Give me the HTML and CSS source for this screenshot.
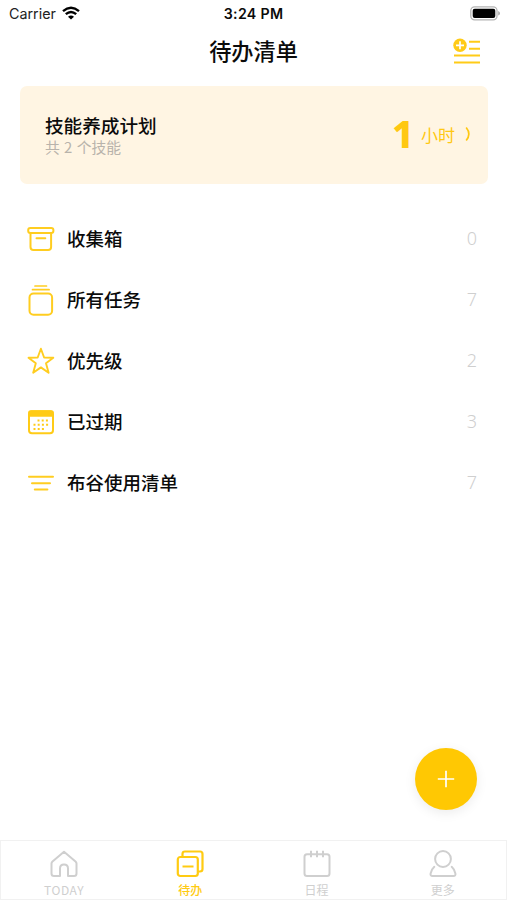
FILE: index.html
```html
<!DOCTYPE html>
<html lang="zh-CN">
<head>
<meta charset="utf-8">
<title>待办清单</title>
<link rel="stylesheet" href="styles.css">
</head>
<body>
<div class="screen">
  <div class="status">
    <div class="carrier"><span>Carrier</span>
      <svg width="18" height="14" viewBox="0 0 18 14" fill="none" stroke="#000" stroke-width="2.4"><path d="M1 5.2Q9-1.6 17 5.2M3.8 8.2Q9 3.6 14.2 8.2"/><path d="M9 13.6 6 10.7Q9 8.3 12 10.7Z" fill="#000" stroke="none"/></svg>
    </div>
    <div class="clock">3:24 PM</div>
    <svg class="battery" width="31" height="15" viewBox="0 0 31 15"><rect x=".8" y=".8" width="26.2" height="13" rx="3.8" fill="#fff" stroke="#b4b4b4" stroke-width="1.3"/><rect x="2.7" y="2.7" width="22.6" height="9.4" rx="2" fill="#000"/><path d="M28.2 5v4.6q1.8-.7 1.8-2.3t-1.8-2.3Z" fill="#aaa"/></svg>
  </div>
  <header class="header">
    <h1>待办清单</h1>
    <svg class="add-list" width="28" height="28" viewBox="0 0 28 28" fill="none" stroke="#ffcb17" stroke-width="2"><circle cx="7" cy="7.3" r="6.7" fill="#ffcb17" stroke="none"/><path d="M7 3.3v8M3 7.3h8" stroke="#fff" stroke-width="1.7"/><path d="M16 3.8h11M16 10.8h11M1 17.6h26M1 24.5h26"/></svg>
  </header>
  <section class="card">
    <div>
      <div class="card-title">技能养成计划</div>
      <div class="card-sub">共 2 个技能</div>
    </div>
    <div class="hours"><span class="num">1</span><span class="unit">小时</span>
      <svg width="6" height="16" viewBox="0 0 6 16" fill="none" stroke="#ffc812" stroke-width="1.7"><path d="M1.2 1.500Q6.500 8 1.200 14.500"/></svg>
    </div>
  </section>
  <ul class="list">
    <li><svg class="icon" viewBox="0 0 28 32" fill="none" stroke="#ffcd20" stroke-width="2"><rect x="1.200" y="4.900" width="25.200" height="5" rx="2.200"/><path d="M3.500 10v14q0 3 3 3h14.600q3 0 3-3V10M9.500 15.300h8.800" stroke-linecap="round"/></svg><span class="name">收集箱</span><span class="count">0</span></li>
    <li><svg class="icon" viewBox="0 0 28 32" fill="none" stroke="#ffcd20" stroke-width="2"><rect x="2.500" y="9.500" width="22.600" height="21.200" rx="4"/><path d="M5.500 5.700h16.600M8 2h11.500" stroke-width="1.700" stroke-linecap="round"/></svg><span class="name">所有任务</span><span class="count">7</span></li>
    <li><svg class="icon" viewBox="0 0 28 32" fill="none" stroke="#ffcd20" stroke-width="1.900" stroke-linejoin="round"><path d="m13.900 3.700 3.200 8.800 9.200.3-7.300 5.500 2.600 9.500-7.700-5.400-7.700 5.400 2.600-9.500-7.300-5.500 9.200-.3Z"/></svg><span class="name">优先级</span><span class="count">2</span></li>
    <li><svg class="icon" viewBox="0 0 28 32" fill="none" stroke="#ffcb17"><rect x="2" y="5.200" width="24" height="22" rx="3" stroke-width="2"/><path d="M2 6.500q0-1.500 2-1.500h20q2 0 2 1.500V10H2Z" fill="#ffcb17" stroke-width="1.500"/><path d="M10.500 14.500h12.500M6.500 18.800H23M6.500 23h12.500" stroke-width="2" stroke-dasharray="2 2.200"/></svg><span class="name">已过期</span><span class="count">3</span></li>
    <li><svg class="icon" viewBox="0 0 28 32" fill="none" stroke="#ffcd20" stroke-width="2" stroke-linecap="round"><path d="M2 9.700h24M5 16.200h18M7.800 22.500h12.600"/></svg><span class="name">布谷使用清单</span><span class="count">7</span></li>
  </ul>
  <button class="fab" aria-label="添加"><svg width="18" height="18" viewBox="0 0 18 18" stroke="#fff" stroke-width="1.700"><path d="M9 .8v16.400M.8 9h16.400"/></svg></button>
  <nav class="tabs">
    <div class="tab"><svg width="28" height="28" viewBox="0 0 28 28" fill="none" stroke="#cfcfcf" stroke-width="2" stroke-linejoin="round"><path d="M10 26H4q-2.500 0-2.500-2.500V13.500q0-1.200 1-2.100L14 1.700l11.500 9.700q1 .9 1 2.100v10Q26.500 26 24 26h-6v-7.500q0-4-4-4t-4 4Z"/></svg><span class="latin">TODAY</span></div>
    <div class="tab active"><svg width="28" height="28" viewBox="0 0 28 28" fill="none" stroke="#ffcb12" stroke-width="2.200"><rect x="1.800" y="7" width="20" height="19" rx="2.500"/><path d="M6.500 6.500V4q0-2.500 2.500-2.500h15q2.500 0 2.500 2.500v15q0 2.500-2.500 2.500h-2M6.500 16.500h11"/></svg><span>待办</span></div>
    <div class="tab"><svg width="28" height="28" viewBox="0 0 28 28" fill="none" stroke="#cfcfcf" stroke-width="2"><rect x="1.500" y="4.200" width="25" height="21.800" rx="2.500"/><path d="M8 .8v6.500M14 .8v6.500M20 .8v6.500"/></svg><span>日程</span></div>
    <div class="tab"><svg width="28" height="28" viewBox="0 0 28 28" fill="none" stroke="#cfcfcf" stroke-width="2"><circle cx="14" cy="9" r="7.900"/><path d="M5.300 16.800q-2.600 2.200-3.700 6.700-.5 2.500 2 2.500h20.800q2.500 0 2-2.500-1.100-4.500-3.700-6.700" stroke-linecap="round"/></svg><span>更多</span></div>
  </nav>
</div>
</body>
</html>
```

FILE: styles.css
```css
* { box-sizing: border-box; }
body {
  margin: 0;
  background: #fff;
  color: #0b0b0b;
  font-family: "Noto Sans CJK SC", sans-serif;
}
.screen {
  position: relative;
  display: flex;
  flex-direction: column;
  width: 507px;
  height: 900px;
  overflow: hidden;
}
.status {
  display: grid;
  grid-template-columns: 1fr auto 1fr;
  align-items: center;
  height: 27px;
  padding: 0 7px 0 9px;
  font: 15px/27px Inter, sans-serif;
}
.carrier { display: flex; align-items: center; gap: 6px; color: #222; font-size: 14.3px; }
.carrier svg { margin-top: -2px; }
.clock { margin-right: 2px; font-size: 14.2px; font-weight: 600; letter-spacing: .3px; }
.battery { justify-self: end; margin-right: -1px; }
.header {
  display: grid;
  grid-template-columns: 1fr auto 1fr;
  align-items: center;
  height: 49px;
  padding: 0 26px;
}
.header h1 { grid-column: 2; margin: 0; font-size: 22.2px; font-weight: 500; line-height: 47px; padding-bottom: 2px; }
.add-list { justify-self: end; }
.card {
  display: flex;
  justify-content: space-between;
  align-items: center;
  height: 98px;
  margin: 10px 19px 0 20px;
  padding: 0 17px 0 25px;
  border-radius: 7px;
  background: #fff5e3;
}
.card-title { font-size: 18.6px; font-weight: 500; line-height: 24px; }
.card-sub { color: #b8b3ab; font-size: 14.8px; line-height: 20px; word-spacing: 1px; }
.hours { display: flex; align-items: center; padding-bottom: 2px; color: #ffc812; }
.num { padding-bottom: 2px; font: 800 38px/44px "Noto Sans", sans-serif; }
.unit { margin: 0 10px 0 7px; font-size: 17px; }
.list { margin: 24px 0 0; padding: 0; list-style: none; }
.list li { display: flex; align-items: center; height: 61px; padding: 0 30px 0 27px; }
.icon { width: 28px; height: 32px; margin-right: 12px; }
.name { flex: 1; padding-bottom: 2px; font-size: 18.5px; font-weight: 500; }
.count { padding-bottom: 2px; color: #cfcfcf; font: 300 18px "Noto Sans", sans-serif; }
.fab {
  position: absolute;
  right: 30px;
  bottom: 90px;
  display: flex;
  align-items: center;
  justify-content: center;
  width: 62px;
  height: 62px;
  padding: 0;
  border: 0;
  border-radius: 50%;
  background: #ffc803;
  box-shadow: 0 3px 12px rgba(0, 0, 0, .08);
}
.tabs {
  display: flex;
  height: 60px;
  margin-top: auto;
  border: 1px solid #f1f1f1;
}
.tab {
  display: flex;
  flex: 1;
  flex-direction: column;
  align-items: center;
  padding-top: 9px;
  color: #cfcfcf;
  font-size: 12px;
  line-height: 14px;
}
.tab span { margin-top: 5px; }
.tab .latin { letter-spacing: .6px; }
.tab.active { color: #ffcb12; font-weight: 500; }
```
